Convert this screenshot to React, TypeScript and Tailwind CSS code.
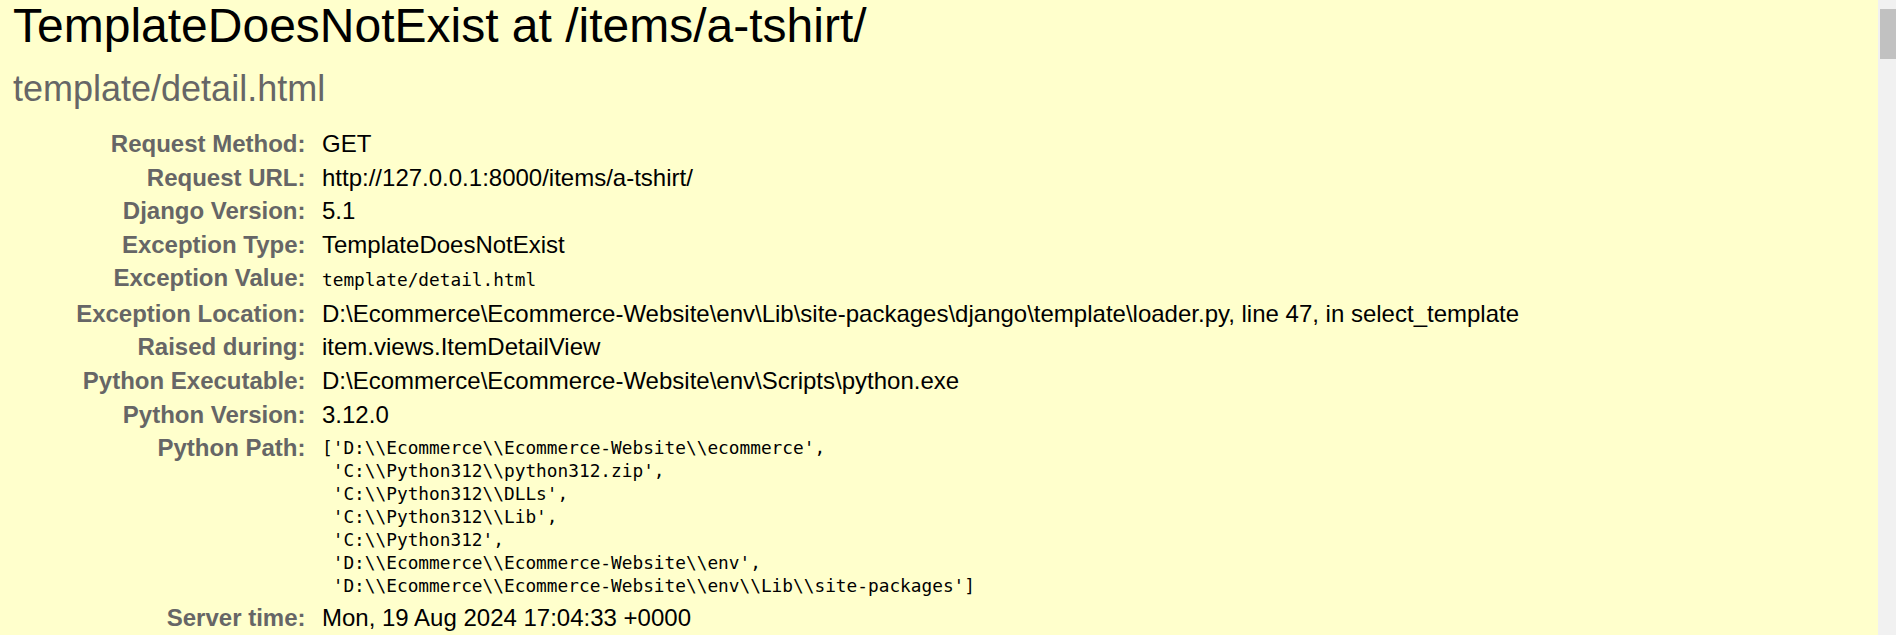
const pythonPath = `['D:\\\\Ecommerce\\\\Ecommerce-Website\\\\ecommerce',
 'C:\\\\Python312\\\\python312.zip',
 'C:\\\\Python312\\\\DLLs',
 'C:\\\\Python312\\\\Lib',
 'C:\\\\Python312',
 'D:\\\\Ecommerce\\\\Ecommerce-Website\\\\env',
 'D:\\\\Ecommerce\\\\Ecommerce-Website\\\\env\\\\Lib\\\\site-packages']`;

type Row = { label: string; value: string; kind?: "code" | "pre" };

const rows: Row[] = [
  { label: "Request Method:", value: "GET" },
  { label: "Request URL:", value: "http://127.0.0.1:8000/items/a-tshirt/" },
  { label: "Django Version:", value: "5.1" },
  { label: "Exception Type:", value: "TemplateDoesNotExist" },
  { label: "Exception Value:", value: "template/detail.html", kind: "code" },
  {
    label: "Exception Location:",
    value:
      "D:\\Ecommerce\\Ecommerce-Website\\env\\Lib\\site-packages\\django\\template\\loader.py, line 47, in select_template",
  },
  { label: "Raised during:", value: "item.views.ItemDetailView" },
  {
    label: "Python Executable:",
    value: "D:\\Ecommerce\\Ecommerce-Website\\env\\Scripts\\python.exe",
  },
  { label: "Python Version:", value: "3.12.0" },
  { label: "Python Path:", value: pythonPath, kind: "pre" },
  { label: "Server time:", value: "Mon, 19 Aug 2024 17:04:33 +0000" },
];

function Value({ row }: { row: Row }) {
  if (row.kind === "code") {
    return (
      <code className="font-['DejaVu_Sans_Mono',monospace] text-[17.8px]">
        {row.value}
      </code>
    );
  }
  if (row.kind === "pre") {
    return (
      <pre className="pt-[3px] font-['DejaVu_Sans_Mono',monospace] text-[17.8px] leading-[22.9px] whitespace-pre">
        {row.value}
      </pre>
    );
  }
  return <>{row.value}</>;
}

export default function App() {
  return (
    <div className="flex h-[635px] overflow-hidden bg-[#ffffcc]">
      <main className="flex-1 pl-[13px] font-['Liberation_Sans',Arial,sans-serif] text-black">
        <h1 className="text-[48px] leading-[52px] font-normal">
          TemplateDoesNotExist at /items/a-tshirt/
        </h1>
        <h2 className="mt-[15.5px] text-[36px] leading-[41.4px] font-normal text-[#666]">
          template/detail.html
        </h2>
        <div className="mt-[18px] grid grid-cols-[304.5px_1fr] text-[24px] leading-[27.6px]">
          {rows.map((row) => (
            <div key={row.label} className="contents">
              <div className="py-[3px] pl-[4.5px] pr-[12px] text-right font-bold text-[#666]">
                {row.label}
              </div>
              <div className="py-[3px] pl-[4.5px]">
                <Value row={row} />
              </div>
            </div>
          ))}
        </div>
      </main>
      <div className="w-[18px] bg-[#f1f1f1] pt-[9px] pl-[2px]">
        <div className="h-[50px] bg-[#c1c1c1]" />
      </div>
    </div>
  );
}
